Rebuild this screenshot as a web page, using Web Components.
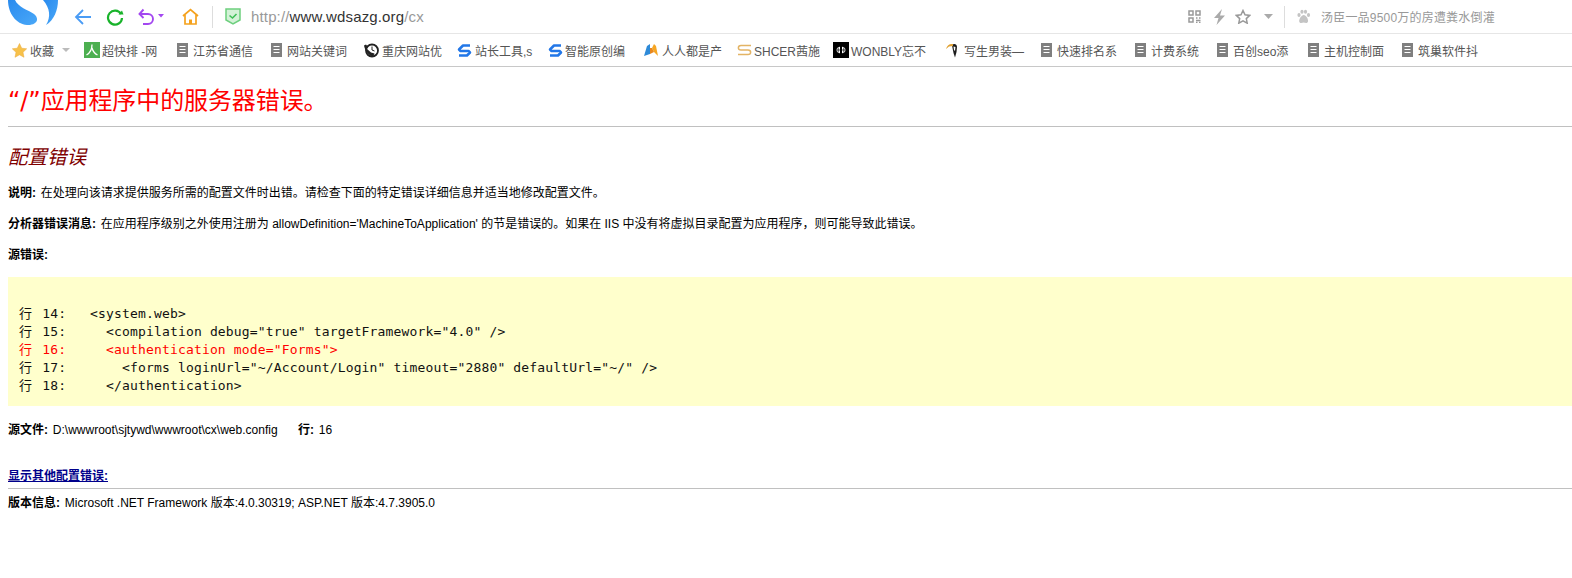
<!doctype html>
<html lang="zh">
<head>
<meta charset="utf-8">
<title>配置错误</title>
<style>
  html, body { margin: 0; padding: 0; background: #fff; }
  body { height: 578px; overflow: hidden; font-family: "Liberation Sans", "Noto Sans CJK SC", sans-serif; }
</style>
</head>
<body>
<browser-toolbar></browser-toolbar>
<bookmarks-bar>
  <bookmark-item w="93" icon="green" gap="2">超快排 -网</bookmark-item>
  <bookmark-item w="94">江苏省通信</bookmark-item>
  <bookmark-item w="92">网站关键词</bookmark-item>
  <bookmark-item w="94" icon="clock" gap="3">重庆网站优</bookmark-item>
  <bookmark-item w="91" icon="swirl" gap="3">站长工具,s</bookmark-item>
  <bookmark-item w="96" icon="swirl" gap="2">智能原创编</bookmark-item>
  <bookmark-item w="93" icon="m" gap="4">人人都是产</bookmark-item>
  <bookmark-item w="96" icon="s" gap="2">SHCER茜施</bookmark-item>
  <bookmark-item w="113" icon="wb" gap="2">WONBLY忘不</bookmark-item>
  <bookmark-item w="95" icon="bird" gap="5">写生男装—</bookmark-item>
  <bookmark-item w="94">快速排名系</bookmark-item>
  <bookmark-item w="82">计费系统</bookmark-item>
  <bookmark-item w="91">百创seo添</bookmark-item>
  <bookmark-item w="94">主机控制面</bookmark-item>
  <bookmark-item w="90">筑巢软件抖</bookmark-item>
</bookmarks-bar>
<error-page>
  <source-block></source-block>
</error-page>

<template id="toolbar-tpl">
  <style>
    :host { display: flex; align-items: center; height: 33px; border-bottom: 1px solid #e6e6e6; overflow: hidden; color: #999; }
    svg { display: block; flex: none; }
    .logo { margin-left: 8px; width: 50px; height: 25px; align-self: flex-start; }
    .nav { display: flex; align-items: center; margin-left: 16px; }
    .sep { width: 1px; height: 22px; background: #ddd; flex: none; }
    .url { margin-left: 10px; font-size: 15px; color: #999; white-space: nowrap; letter-spacing: .01em; }
    .url b { font-weight: 400; color: #333; }
    .spacer { flex: 1; }
    .search { font-size: 12px; letter-spacing: .2px; color: #999; white-space: nowrap; margin-left: 10px; width: 251px; }
  </style>
  <svg class="logo" viewBox="0 0 50 25">
    <defs><linearGradient id="lg" x1="0" y1="0" x2="1" y2="1"><stop offset="0" stop-color="#2a8bee"/><stop offset="1" stop-color="#4aa8f8"/></linearGradient></defs>
    <path d="M0 0H7C10 7 20 10 26 14C31 18 30 24 22 25C10 26 0 15 0 0Z" fill="url(#lg)"/>
    <path d="M35 0H50C50 10 46 20 38 25C43 17 42 8 35 0Z" fill="url(#lg)"/>
  </svg>
  <div class="nav">
    <svg width="18" height="18" viewBox="0 0 18 18" fill="none" stroke="#4a9cf5" stroke-width="1.8"><path d="M17 9H2M9 2L2 9l7 7"/></svg>
    <svg style="margin-left:14px" width="18" height="18" viewBox="0 0 18 18" fill="none" stroke="#19b32b" stroke-width="2.2"><path d="M15 6A7 7 0 1 0 16 10"/><path d="M17.5 6.5H12.5L16 2.5Z" fill="#19b32b" stroke="none"/></svg>
    <svg style="margin-left:14px" width="17" height="18" viewBox="0 0 17 18" fill="none" stroke="#a347f0" stroke-width="1.9"><path d="M2 6H10A5 5 0 0 1 10 16H5"/><path d="M5.5 1.5L1.5 6l4 4"/></svg>
    <svg style="margin-left:3px;margin-bottom:2px" width="6" height="4" viewBox="0 0 6 4"><path d="M0 0H6L3 3.5Z" fill="#a347f0"/></svg>
    <svg style="margin-left:18px" width="17" height="18" viewBox="0 0 17 18" fill="none" stroke="#f5a21e" stroke-width="1.7"><path d="M1 8L8.500 1.500 16 8M3 7V16H14V7"/><path d="M7 16V11.500H10V16Z" fill="#f5a21e" stroke="none"/></svg>
  </div>
  <span class="sep" style="margin-left:13px"></span>
  <svg style="margin-left:12px" width="16" height="17" viewBox="0 0 16 17"><path d="M1 1H15V12L8 16 1 12Z" fill="#d4f2d8" stroke="#6dcf7e" stroke-width="1.500"/><path d="M4.500 7.500L7.500 10l4-4" fill="none" stroke="#3fbf58" stroke-width="1.600"/></svg>
  <span class="url">http://<b>www.wdsazg.org</b>/cx</span>
  <span class="spacer"></span>
  <svg width="13" height="13" viewBox="0 0 13 13" fill="none" stroke="#999" stroke-width="1.500"><rect x="1" y="1" width="4" height="4"/><rect x="8" y="1" width="4" height="4"/><rect x="1" y="8" width="4" height="4"/><path d="M8 8h1.500M11 8h1.500M8 10.500h4.500M8 12.500h1.500M11 12.500h1.500"/></svg>
  <svg style="margin-left:12px" width="13" height="16" viewBox="0 0 13 16"><path d="M9 0L1 9H5.500L3.500 16 12 6.500H7Z" fill="#aaa"/></svg>
  <svg style="margin-left:9px" width="16" height="15" viewBox="0 0 16 15" fill="none" stroke="#999" stroke-width="1.500"><path d="M8 1.500l2 4.300 4.700.6-3.400 3.200.9 4.600L8 11.900l-4.200 2.300.9-4.600L1.300 6.400 6 5.800Z"/></svg>
  <svg style="margin-left:13px" width="9" height="5" viewBox="0 0 9 5"><path d="M0 0H9L4.500 5Z" fill="#aaa"/></svg>
  <span class="sep" style="margin-left:11px"></span>
  <svg style="margin-left:11px" width="15" height="15" viewBox="0 0 15 15" fill="#c4c4c4"><ellipse cx="3" cy="6" rx="1.600" ry="2"/><ellipse cx="6" cy="2.800" rx="1.600" ry="2"/><ellipse cx="9.500" cy="2.800" rx="1.600" ry="2"/><ellipse cx="12.500" cy="6" rx="1.600" ry="2"/><path d="M7.700 6C10 6 12.500 10 12 12.500 11 15 9 13.500 7.700 13.500S4 15 3.200 12.500C3 10 5.500 6 7.700 6Z"/></svg>
  <span class="search">汤臣一品9500万的房遭粪水倒灌</span>
</template>

<template id="bookmarks-tpl">
  <style>
    :host { display: flex; align-items: center; height: 32px; border-bottom: 1px solid #c8c8c8; padding-left: 12px; overflow: hidden; }
    .fav { display: flex; align-items: center; width: 72px; font-size: 12px; color: #555; flex: none; }
    .fav span { margin-left: 3px; }
    .fav i { margin-left: 8px; border: 4px solid transparent; border-top: 4px solid #bbb; border-bottom: 0; }
  </style>
  <div class="fav">
    <svg width="15" height="15" viewBox="0 0 15 15"><path d="M7.500.5l2.200 4.700 5 .6-3.700 3.500 1 5L7.500 11.800 3 14.300l1-5L.3 5.800l5-.6Z" fill="#f7c14a" stroke="#e8a93a" stroke-width=".5"/></svg>
    <span>收藏</span><i></i>
  </div>
  <slot></slot>
</template>

<template id="bookmark-tpl">
  <style>
    :host { display: flex; align-items: center; flex: none; font-size: 12px; color: #555; white-space: nowrap; overflow: hidden; box-sizing: border-box; }
    #icon { display: contents; }
    svg { display: block; flex: none; margin-right: var(--gap, 5px); }
  </style>
  <span id="icon"></span><slot></slot>
</template>

<template id="source-tpl">
  <style>
    :host { display: block; background: #ffc; margin-top: 14px; height: 129px; box-sizing: border-box; padding: 28px 11px 0; }
    pre { margin: 0; font: 13px/18px "DejaVu Sans Mono", "Noto Sans CJK SC", monospace; color: #111; letter-spacing: .16px; }
    i { font-style: normal; margin-right: 2px; }
    .err { color: #f00; }
  </style>
  <pre><i>行</i> 14:   &lt;system.web&gt;
<i>行</i> 15:     &lt;compilation debug="true" targetFramework="4.0" /&gt;
<span class="err"><i>行</i> 16:     &lt;authentication mode="Forms"&gt;</span>
<i>行</i> 17:       &lt;forms loginUrl="~/Account/Login" timeout="2880" defaultUrl="~/" /&gt;
<i>行</i> 18:     &lt;/authentication&gt;</pre>
</template>

<template id="error-tpl">
  <style>
    :host { display: block; padding-left: 8px; font-size: 12px; color: #000; font-family: "Liberation Sans", "Noto Sans CJK SC", sans-serif; }
    h1 { margin: 0; padding-top: 17px; font: 400 24px/35px "DejaVu Sans", "Noto Sans CJK SC", sans-serif; letter-spacing: -.1px; color: #f00; }
    hr { margin: 7px 0 0; border: 0; height: 1px; background: #c0c0c0; }
    h2 { margin: 16px 0 0; font-size: 19.5px; line-height: 28px; font-weight: 400; font-style: italic; color: #800000; }
    p { margin: 0; line-height: 16px; white-space: nowrap; }
    b { margin-right: 1.5px; }
    a { color: #00008b; font-weight: 700; }
    .tab { margin-left: 17px; }
  </style>
  <h1>“/”应用程序中的服务器错误。</h1>
  <hr>
  <h2>配置错误</h2>
  <p style="margin-top:14px"><b>说明:</b> 在处理向该请求提供服务所需的配置文件时出错。请检查下面的特定错误详细信息并适当地修改配置文件。</p>
  <p style="margin-top:15px"><b>分析器错误消息:</b> 在应用程序级别之外使用注册为 allowDefinition='MachineToApplication' 的节是错误的。如果在 IIS 中没有将虚拟目录配置为应用程序，则可能导致此错误。</p>
  <p style="margin-top:15px"><b>源错误:</b></p>
  <slot></slot>
  <p style="margin-top:16px"><b>源文件:</b> D:\wwwroot\sjtywd\wwwroot\cx\web.config <b class="tab">行:</b> 16</p>
  <p style="margin-top:30px"><a href="#">显示其他配置错误:</a></p>
  <hr style="margin-top:4px">
  <p style="margin-top:6px"><b>版本信息:</b> Microsoft .NET Framework 版本:4.0.30319; ASP.NET 版本:4.7.3905.0</p>
</template>

<script>
  const ICONS = {
    doc: '<svg width="11" height="14" viewBox="0 0 11 14"><rect width="11" height="14" fill="#7f7f7f"/><path d="M2.500 3.500h6M2.500 6.500h6M2.500 9.500h6" stroke="#fff" stroke-width="1.200"/></svg>',
    green: '<svg width="16" height="16" viewBox="0 0 16 16"><rect width="16" height="16" fill="#4caf50"/><path d="M8 2.500C8 8 6 11 2.500 13M8 6c1 3.500 2.500 5.500 5.500 7" fill="none" stroke="#fff" stroke-width="1.300"/></svg>',
    clock: '<svg width="16" height="15" viewBox="0 0 16 15"><circle cx="9" cy="7.500" r="6" fill="#fff" stroke="#222" stroke-width="1.800"/><path d="M1 2.500L3 1.500 5 4 3.500 5.500 8 9.500 11.500 10.500 10 13.500C6 13 2 8 1 2.500Z" fill="#222"/><path d="M9 3.500V7l2.500 1" fill="none" stroke="#222"/></svg>',
    swirl: '<svg width="15" height="15" viewBox="0 0 15 15" fill="none" stroke="#2277e8" stroke-width="2.500" stroke-linejoin="round"><path d="M13 2.500H6L2 6.500 3.500 8H11.500L13 9.500 10 12.500H2"/></svg>',
    m: '<svg width="14" height="15" viewBox="0 0 14 15"><path d="M0 13L3 3 6 1V11Z" fill="#2d8ad8"/><path d="M6 1L8 5 10 1 12 3 14 13 10 9 8 5Z" fill="#f6a623"/><path d="M6 5L8 5 10 9 6 11Z" fill="#e8871e"/></svg>',
    s: '<svg width="15" height="12" viewBox="0 0 15 12" fill="none" stroke="#e3b465" stroke-width="1.500"><path d="M14 1.500H4C.5 1.500.5 6 4 6H11C14.500 6 14.500 10.500 11 10.500H1"/></svg>',
    wb: '<svg width="16" height="16" viewBox="0 0 16 16"><rect width="16" height="16" fill="#000"/><path d="M3.500 8C3.500 6 5 5 7 4.800V11.200C5 11 3.500 10 3.500 8ZM9 4.800C11 5 12.500 6 12.500 8S11 11 9 11.200Z" fill="#fff"/><path d="M5.200 5.500v5M10.800 5.500v5M3.500 8h9" stroke="#000" stroke-width=".7"/></svg>',
    bird: '<svg width="13" height="16" viewBox="0 0 13 16"><path d="M6 3C8 1 11 2 11 5L10.500 10 9 15.500 7.500 11 6.500 6Z" fill="#1c1c1c"/><path d="M7.500 4.500L9.500 5 9 9 8 8Z" fill="#fff"/><path d="M0 7C1 3.500 3.500 1.500 7 2L7 4 3 4.500Z" fill="#e0a030"/></svg>',
  };

  class BrowserToolbar extends HTMLElement {
    constructor() {
      super();
      this.attachShadow({ mode: 'open' }).append(document.getElementById('toolbar-tpl').content.cloneNode(true));
    }
  }

  class BookmarksBar extends HTMLElement {
    constructor() {
      super();
      this.attachShadow({ mode: 'open' }).append(document.getElementById('bookmarks-tpl').content.cloneNode(true));
    }
  }

  class BookmarkItem extends HTMLElement {
    constructor() {
      super();
      this.attachShadow({ mode: 'open' }).append(document.getElementById('bookmark-tpl').content.cloneNode(true));
    }

    connectedCallback() {
      this.style.width = `${this.getAttribute('w')}px`;
      if (this.hasAttribute('gap')) this.style.setProperty('--gap', `${this.getAttribute('gap')}px`);
      this.shadowRoot.getElementById('icon').innerHTML = ICONS[this.getAttribute('icon') || 'doc'];
    }
  }

  class SourceBlock extends HTMLElement {
    constructor() {
      super();
      this.attachShadow({ mode: 'open' }).append(document.getElementById('source-tpl').content.cloneNode(true));
    }
  }

  class ErrorPage extends HTMLElement {
    constructor() {
      super();
      this.attachShadow({ mode: 'open' }).append(document.getElementById('error-tpl').content.cloneNode(true));
    }
  }

  customElements.define('browser-toolbar', BrowserToolbar);
  customElements.define('bookmarks-bar', BookmarksBar);
  customElements.define('bookmark-item', BookmarkItem);
  customElements.define('source-block', SourceBlock);
  customElements.define('error-page', ErrorPage);
</script>
</body>
</html>
